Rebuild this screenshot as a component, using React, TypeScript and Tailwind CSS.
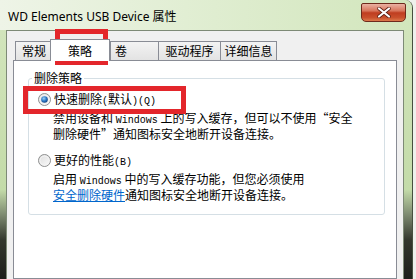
import React from "react";

const M = ({ children }: { children: React.ReactNode }) => (
  <span className="font-['Liberation_Mono',monospace] text-[10px]">{children}</span>
);

const LQ = () => <span className="inline-block w-[12px] text-right">“</span>;
const RQ = () => <span className="inline-block w-[12px] text-left">”</span>;

function Radio({ checked }: { checked: boolean }) {
  return (
    <svg width="13" height="13" viewBox="0 0 13 13" className="shrink-0">
      <defs>
        <linearGradient id={checked ? "rg1" : "rg2"} x1="0" y1="0" x2="1" y2="1">
          <stop offset="0" stopColor="#dcdcdc" />
          <stop offset="1" stopColor="#fbfbfb" />
        </linearGradient>
        <radialGradient id="dot" cx="0.4" cy="0.35" r="0.7">
          <stop offset="0" stopColor="#9fd3f7" />
          <stop offset="0.55" stopColor="#2b78c6" />
          <stop offset="1" stopColor="#163f7c" />
        </radialGradient>
      </defs>
      <circle cx="6.5" cy="6.5" r="6" fill={`url(#${checked ? "rg1" : "rg2"})`} stroke="#8e8f8f" strokeWidth="1" />
      <circle cx="6.5" cy="6.5" r="4.5" fill="none" stroke="#f4f4f4" strokeWidth="1" />
      {checked && <circle cx="6.5" cy="6.5" r="3.3" fill="url(#dot)" />}
    </svg>
  );
}

export default function App() {
  const tabBase =
    "h-[19px] border border-b-0 border-[#898c95] bg-[linear-gradient(to_bottom,#f3f3f3,#e3e3e3)] flex items-center text-[12px] leading-[14px] text-black";
  return (
    <div className="w-[416px] h-[279px] overflow-hidden bg-[#eef0ec] relative font-['Noto_Sans_CJK_SC',sans-serif]">
      <div className="w-[413px] h-full flex flex-col rounded-tr-[8px] border-r border-[#46503f] bg-[linear-gradient(to_bottom,#d4e6bf_0%,#c3dba8_68%,#7d8a70_77%,#34382e_86%,#1d1f1a_100%)]">
        {/* Title bar */}
        <div className="h-[30px] flex items-start rounded-tr-[8px] bg-[linear-gradient(to_right,#eef4e7,#e1eed3_45%,#d2e6bc)]">
          <div className="pl-[8px] pt-[9px] text-[12px] leading-[16px] text-black font-['Noto_Sans','Noto_Sans_CJK_SC',sans-serif] whitespace-nowrap">
            WD Elements USB Device 属性
          </div>
          <div className="ml-auto mt-[3px] mr-[6px] w-[45px] h-[19px] rounded-b-[5px] rounded-t-[2px] border border-[#6e2a1c] bg-[linear-gradient(to_bottom,#eab2a2_0%,#d8765c_40%,#bf3d20_52%,#c9502c_80%,#dc7a4c_100%)] flex items-center justify-center">
            <svg width="14" height="11" viewBox="0 0 14 11">
              <path d="M2 1.5 L12 9.5 M12 1.5 L2 9.5" stroke="#5a1d10" strokeWidth="3.6" strokeLinecap="round" />
              <path d="M2 1.5 L12 9.5 M12 1.5 L2 9.5" stroke="#ffffff" strokeWidth="2.2" strokeLinecap="round" />
            </svg>
          </div>
        </div>
        {/* Client area */}
        <div className="flex-1 ml-[6px] mr-[8px] border-l border-t border-r border-[#7d8a76] bg-[#f0f0f0] px-[6px] pt-[8px] flex flex-col">
          <div className="h-[21px] flex items-end pl-[2px]">
            <div className={`${tabBase} justify-center w-[38px]`}>常规</div>
            <div className="relative z-10 -ml-[3px] -mb-px w-[60px] h-[22px] border border-b-0 border-[#898c95] bg-white flex items-center justify-center text-[12px] leading-[14px] text-black">
              策略
            </div>
            <div className={`${tabBase} justify-start pl-[4px] w-[49px]`}>卷</div>
            <div className={`${tabBase} justify-center -ml-px w-[63px]`}>驱动程序</div>
            <div className={`${tabBase} justify-center -ml-px w-[57px]`}>详细信息</div>
          </div>
          <div className="flex-1 bg-white border border-[#898c95] pt-[17px] pl-[14px] pr-[11px]">
            <div className="relative h-[137px] border border-[#d5dfe5] rounded-[3px] pt-[14px] pl-[9px] text-[12px] text-black">
              <div className="absolute left-[3px] -top-[8px] px-[2px] bg-white leading-[14px]">删除策略</div>
              <div className="flex items-center h-[13px]">
                <Radio checked />
                <span className="ml-[3px] leading-[13px] whitespace-nowrap">
                  快速删除<M>(</M>默认<M>)(Q)</M>
                </span>
              </div>
              <div className="mt-[5px] pl-[15px] leading-[13px] whitespace-nowrap">
                <div>
                  禁用设备和 <M>Windows</M> 上的写入缓存，但可以不使用<LQ />安全
                </div>
                <div>
                  删除硬件<RQ />通知图标安全地断开设备连接。
                </div>
              </div>
              <div className="mt-[14px] flex items-center h-[13px]">
                <Radio checked={false} />
                <span className="ml-[3px] leading-[13px] whitespace-nowrap">
                  更好的性能<M>(B)</M>
                </span>
              </div>
              <div className="mt-[5px] pl-[15px] leading-[13px] whitespace-nowrap">
                <div>
                  启用 <M>Windows</M> 中的写入缓存功能，但您必须使用
                </div>
                <div>
                  <span className="text-[#0066cc] underline">安全删除硬件</span>通知图标安全地断开设备连接。
                </div>
              </div>
            </div>
          </div>
        </div>
      </div>
      {/* Red annotation boxes */}
      <div className="absolute left-[55px] top-[29px] w-[53px] h-[36px] border-[5px] border-[#e3262b]" />
      <div className="absolute left-[23px] top-[86px] w-[163px] h-[28px] border-[5px] border-[#e3262b]" />
    </div>
  );
}
